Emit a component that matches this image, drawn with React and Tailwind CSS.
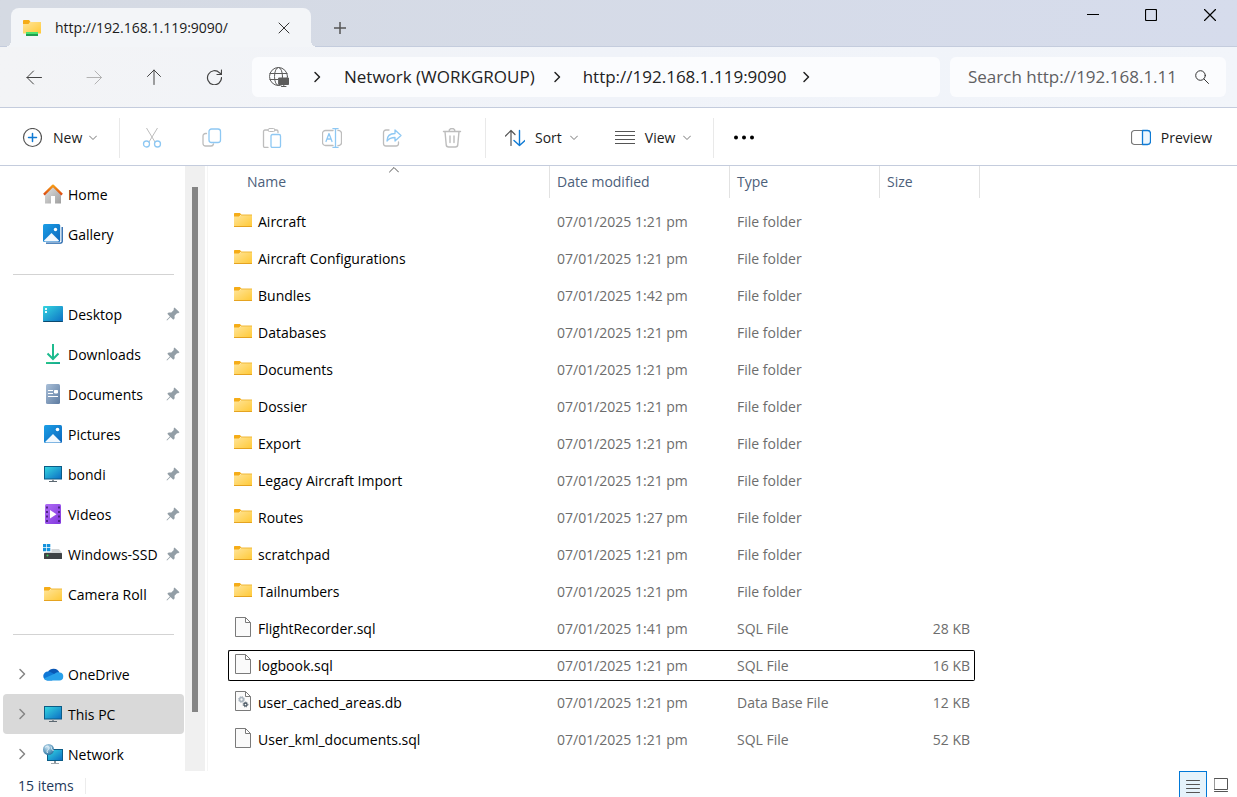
import React, { useState } from "react";

const quickAccess = [
  { name: "Desktop", icon: "desktop" },
  { name: "Downloads", icon: "downloads" },
  { name: "Documents", icon: "documents" },
  { name: "Pictures", icon: "pictures" },
  { name: "bondi", icon: "monitor" },
  { name: "Videos", icon: "videos" },
  { name: "Windows-SSD", icon: "drive" },
  { name: "Camera Roll", icon: "folder" },
];

const locations = [
  { name: "OneDrive", icon: "onedrive" },
  { name: "This PC", icon: "monitor" },
  { name: "Network", icon: "network" },
];

const folder = (name, date = "07/01/2025 1:21 pm") => ({
  name,
  date,
  type: "File folder",
  icon: "folder",
  size: "",
});

const files = [
  folder("Aircraft"),
  folder("Aircraft Configurations"),
  folder("Bundles", "07/01/2025 1:42 pm"),
  folder("Databases"),
  folder("Documents"),
  folder("Dossier"),
  folder("Export"),
  folder("Legacy Aircraft Import"),
  folder("Routes", "07/01/2025 1:27 pm"),
  folder("scratchpad"),
  folder("Tailnumbers"),
  {
    name: "FlightRecorder.sql",
    date: "07/01/2025 1:41 pm",
    type: "SQL File",
    icon: "file",
    size: "28 KB",
  },
  {
    name: "logbook.sql",
    date: "07/01/2025 1:21 pm",
    type: "SQL File",
    icon: "file",
    size: "16 KB",
  },
  {
    name: "user_cached_areas.db",
    date: "07/01/2025 1:21 pm",
    type: "Data Base File",
    icon: "database",
    size: "12 KB",
  },
  {
    name: "User_kml_documents.sql",
    date: "07/01/2025 1:21 pm",
    type: "SQL File",
    icon: "file",
    size: "52 KB",
  },
];

// Gradients shared by the coloured icons
const IconDefs = () => (
  <svg width="0" height="0" className="absolute" aria-hidden="true">
    <defs>
      <linearGradient id="gFolder" x1="0" y1="0" x2="1" y2="1">
        <stop offset="0" stopColor="#ffe59b" />
        <stop offset="1" stopColor="#ffc937" />
      </linearGradient>
      <linearGradient id="gScreen" x1="0" y1="0" x2="1" y2="1">
        <stop offset="0" stopColor="#35d6e0" />
        <stop offset="1" stopColor="#0c6fc4" />
      </linearGradient>
      <linearGradient id="gPicture" x1="0" y1="0" x2="1" y2="1">
        <stop offset="0" stopColor="#1c9fe6" />
        <stop offset="1" stopColor="#0a66bd" />
      </linearGradient>
      <linearGradient id="gRoof" x1="0" y1="0" x2="0" y2="1">
        <stop offset="0" stopColor="#f59a14" />
        <stop offset="1" stopColor="#dc4a12" />
      </linearGradient>
      <linearGradient id="gWall" x1="0" y1="0" x2="1" y2="1">
        <stop offset="0" stopColor="#e4e4e4" />
        <stop offset="1" stopColor="#9e9e9e" />
      </linearGradient>
      <linearGradient id="gDoc" x1="0" y1="0" x2="1" y2="1">
        <stop offset="0" stopColor="#a9bfd8" />
        <stop offset="1" stopColor="#5d7ba0" />
      </linearGradient>
      <linearGradient id="gDown" x1="0" y1="0" x2="1" y2="1">
        <stop offset="0" stopColor="#2fcf86" />
        <stop offset="1" stopColor="#0e9f96" />
      </linearGradient>
      <linearGradient id="gVideo" x1="0" y1="0" x2="1" y2="1">
        <stop offset="0" stopColor="#b06cf5" />
        <stop offset="1" stopColor="#8138dd" />
      </linearGradient>
      <radialGradient id="gGlobe" cx="0.4" cy="0.3" r="0.7">
        <stop offset="0" stopColor="#c9e4f3" />
        <stop offset="1" stopColor="#2f76a3" />
      </radialGradient>
    </defs>
  </svg>
);

const drawings = {
  home: (
    <>
      <path d="M2 9.5 10 2l8 7.5v10h-6v-7.5H8v7.5H2z" fill="url(#gWall)" />
      <path
        d="M.9 10.6 10 1.600l9.100 9"
        fill="none"
        stroke="url(#gRoof)"
        strokeWidth="2.2"
        strokeLinejoin="round"
      />
    </>
  ),
  gallery: (
    <>
      <path d="M3 19.2h14.500a1.700 1.700 0 0 0 1.700-1.700V3" fill="none" stroke="#1a5fa8" strokeWidth="1.3" />
      <rect width="17.2" height="18" rx="1.5" fill="url(#gPicture)" />
      <path d="M1 16.500 8.500 9l7.500 7.500a1 1 0 0 1-1 1H2a1 1 0 0 1-1-1z" fill="#f1f8fe" />
      <circle cx="12.5" cy="5.5" r="1.7" fill="#fff" />
    </>
  ),
  desktop: (
    <>
      <rect y="2" width="20" height="16" rx="1" fill="url(#gScreen)" />
      <path d="M0 17h20a1 1 0 0 1-1 1H1a1 1 0 0 1-1-1z" fill="#0b4a6f" />
      <path d="M2 4h2v2H2zM2 7h2v2H2z" fill="#e8fbff" />
    </>
  ),
  downloads: (
    <>
      <path
        d="M10 0v14.500M4.500 9.500 10 15l5.500-5.500"
        fill="none"
        stroke="#1dbb8e"
        strokeWidth="2"
      />
      <path d="M3 18h14v2H3z" fill="url(#gDown)" />
    </>
  ),
  documents: (
    <>
      <rect x="3" y="0" width="14" height="20" rx="1.5" fill="url(#gDoc)" />
      <path
        d="M5 6.500h5M5 9.500h5M5 12.500h10M11.500 6.500h3v2.500h-3z"
        fill="#fff"
        stroke="#fff"
      />
    </>
  ),
  pictures: (
    <>
      <rect x="1" y="1" width="18" height="18" rx="1.5" fill="url(#gPicture)" />
      <path d="M2.500 17.500 10 10l7.500 7.500a.6.600 0 0 1-.5 1H3a.6.600 0 0 1-.5-1z" fill="#f1f8fe" />
      <circle cx="14.5" cy="5.5" r="1.8" fill="#fff" />
    </>
  ),
  monitor: (
    <>
      <rect x="1" y="2" width="18" height="13.5" fill="#0b5c87" />
      <rect x="2" y="3" width="16" height="11.5" fill="url(#gScreen)" />
      <path d="M9 15.500h2V17H9z" fill="#8c959c" />
      <path d="M6 17h8v1H6z" fill="#5b6770" />
    </>
  ),
  videos: (
    <>
      <rect x="2" y="0" width="16" height="20" rx="1.5" fill="url(#gVideo)" />
      <path
        d="M4 2.500v16M16 2.500v16"
        stroke="#45207c"
        strokeWidth="1.8"
        strokeDasharray="2 2.5"
      />
      <path d="M7 6v8.500l6.500-4.250z" fill="#fff" />
    </>
  ),
  drive: (
    <>
      <path
        d="M0 0h3.300v3.300H0zM4 0h3.300v3.300H4zM0 4h3.300v3.300H0zM4 4h3.300v3.300H4z"
        fill="#1592dc"
      />
      <path d="M8.500 5h7.500l3 4H1l2-1h5.500z" fill="#d3d6d8" />
      <rect x="1" y="9" width="18" height="6" rx="0.5" fill="#3f4245" />
      <circle cx="4.5" cy="11.5" r="1" fill="#3ad15b" />
    </>
  ),
  folder: (
    <>
      <path d="M1 3.500A.8.800 0 0 1 1.800 3H7l1.500 2h-1L6 7H1z" fill="#f5ac17" />
      <path d="M1 6.500h5.200L8 5h11v11.500H1z" fill="url(#gFolder)" />
      <path d="M8 5h11" stroke="#f0b93a" />
      <path d="M1 16.500h18" stroke="#e5a320" />
    </>
  ),
  onedrive: (
    <>
      <path d="M5 8a6.500 6.500 0 0 1 11.500.5L10 12z" fill="#0a57b4" />
      <path d="M4.500 16.500A4.500 4.500 0 0 1 5 7.500c2 0 4 1 9 4.500l-5 4.500z" fill="#0f78d6" />
      <path d="M4.500 16.500c-1.500 0-3-.8-3.700-2L12 9.500c1-.8 3-1.500 4.500-1A4 4 0 0 1 16 16.500z" fill="#28a0ea" />
    </>
  ),
  network: (
    <>
      <rect x="4" y="5" width="16" height="12" fill="#0b5c87" />
      <rect x="5" y="6" width="14" height="10" fill="url(#gScreen)" />
      <path d="M11 17h2v2h-2z" fill="#8c959c" />
      <path d="M8 19h8v1H8z" fill="#a0a8ae" />
      <circle cx="5.5" cy="5.5" r="5.5" fill="url(#gGlobe)" />
      <path d="M2 3.500c2-2 4-1.500 4 .5S3 6 4.500 9M8 2.500c1 1.500-.5 3 2.500 4" fill="none" stroke="#eaf6fc" />
    </>
  ),
  file: (
    <path d="M2.500.5h10l5 5v14h-15zM12.500.5v5h5" fill="#fafafa" stroke="#7a7a7a" />
  ),
  database: (
    <>
      <path d="M2.500.5h10l5 5v14h-15zM12.500.5v5h5" fill="#fafafa" stroke="#7a7a7a" />
      <circle cx="8.5" cy="8.5" r="1.9" fill="none" stroke="#a9b4be" strokeWidth="1.5" />
      <circle cx="8.5" cy="8.5" r="3" fill="none" stroke="#a9b4be" strokeDasharray="1.2 1.15" />
      <circle cx="12.5" cy="13.5" r="1.5" fill="none" stroke="#4c5a66" strokeWidth="1.3" />
      <circle cx="12.5" cy="13.5" r="2.4" fill="none" stroke="#4c5a66" strokeDasharray="1 0.88" />
    </>
  ),
  drivefolder: (
    <>
      <path d="M1 2.500A1 1 0 0 1 2 2h5l1.500 2L6 7H1z" fill="#f5ac17" />
      <path d="M1 6h5.500L8 4h11v11.500H1z" fill="url(#gFolder)" />
      <rect x="4" y="14" width="12" height="3" fill="#4be36f" />
      <rect x="4" y="16" width="12" height="2" fill="#1f9e50" />
    </>
  ),
};

const Picture = ({ name }) => (
  <svg viewBox="0 0 20 20" className="h-5 w-5 shrink-0 overflow-visible" aria-hidden="true">
    {drawings[name]}
  </svg>
);

// Thin outline icon
const Line = ({ children, className = "h-5 w-5", box = "0 0 20 20" }) => (
  <svg
    viewBox={box}
    fill="none"
    stroke="currentColor"
    strokeLinecap="round"
    strokeLinejoin="round"
    className={`shrink-0 ${className}`}
    aria-hidden="true"
  >
    {children}
  </svg>
);

const ChevronRight = ({ className }) => (
  <Line box="0 0 8 12" className={`h-3 w-2 ${className}`}>
    <path d="M2 1.500 6.500 6 2 10.500" strokeWidth="1.5" />
  </Line>
);

const ChevronDown = () => (
  <Line box="0 0 8 6" className="h-1.5 w-2 text-[#777]">
    <path d="M.5 1 4 4.500 7.500 1" />
  </Line>
);

const Pin = () => (
  <svg viewBox="0 0 14 14" className="h-3.5 w-3.5 shrink-0" aria-hidden="true">
    <path
      d="M8.500.5 13.500 5.300l-1.300 1-1.200-.1-2.500 2.500.2 2.600-1.400 1.400-2.800-2.700L1 13.500l-.5-.5 3.400-3.500L1.300 6.700l1.400-1.300 2.600.2 2.500-2.500-.2-1.300z"
      fill="#939ea6"
    />
  </svg>
);

const TitleBar = () => (
  <header className="flex h-[47px] shrink-0 items-start justify-between border-b border-[#c4ccdd] bg-linear-to-r from-[#d5dae3] to-[#d6dcec]">
    <div className="flex pt-2 pl-[11px]">
      <div className="relative -mb-px flex h-[39px] w-[300px] items-center rounded-t-lg bg-[#f3f5f8] pl-[11px] pr-[17px]">
        <span className="absolute bottom-0 -left-1.5 h-1.5 w-1.5 bg-[radial-gradient(circle_at_0_0,transparent_6px,#f3f5f8_6px)]" />
        <span className="absolute -right-1.5 bottom-0 h-1.5 w-1.5 bg-[radial-gradient(circle_at_100%_0,transparent_6px,#f3f5f8_6px)]" />
        <Picture name="drivefolder" />
        <span className="ml-[13px] flex-1 text-sm font-medium text-[#1b1b1b]">
          http://192.168.1.119:9090/
        </span>
        <button aria-label="Close tab" className="flex h-5 w-5 items-center justify-center text-[#333]">
          <Line box="0 0 12 12" className="h-3 w-3">
            <path d="m1 1 10 10M11 1 1 11" />
          </Line>
        </button>
      </div>
      <button aria-label="New tab" className="ml-[19px] flex h-10 w-5 items-center justify-center text-[#555]">
        <Line box="0 0 12 12" className="h-3 w-3">
          <path d="M6 0v12M0 6h12" strokeWidth="1.5" />
        </Line>
      </button>
    </div>
    <div className="flex text-black">
      <button aria-label="Minimise" className="flex h-[30px] w-[58px] items-center justify-center">
        <Line box="0 0 12 12" className="h-3 w-3">
          <path d="M0 5.500h12" />
        </Line>
      </button>
      <button aria-label="Maximise" className="flex h-[30px] w-[58px] items-center justify-center">
        <Line box="0 0 12 12" className="h-3 w-3">
          <rect x="0.5" y="0.5" width="11" height="11" rx="1" strokeWidth="1.2" />
        </Line>
      </button>
      <button aria-label="Close" className="flex h-[30px] w-[57px] items-center justify-center pl-0.5">
        <Line box="0 0 12 12" className="h-3 w-3">
          <path d="m.5.5 11 11M11.500.5l-11 11" strokeWidth="1.2" />
        </Line>
      </button>
    </div>
  </header>
);

const NavButton = ({ label, children, className = "text-[#444]" }) => (
  <button aria-label={label} className={`flex h-10 w-[60px] items-center justify-center ${className}`}>
    <Line box="0 0 16 16" className="h-4 w-4">
      {children}
    </Line>
  </button>
);

const AddressBar = () => (
  <div className="flex h-[61px] shrink-0 items-center border-b border-[#c4ccdd] bg-linear-to-r from-[#f3f4f6] via-[#f0f3f9] to-[#f2f5fa] pl-1 pr-[11px] text-[17px] text-[#222]">
    <nav className="mr-2 flex">
      <NavButton label="Back">
        <path d="M15.500 8.500H1M7.500 2 1 8.500 7.500 15" />
      </NavButton>
      <NavButton label="Forward" className="text-[#b3b3b3]">
        <path d="M1 8.500h14.500M9 2l6.500 6.500L9 15" />
      </NavButton>
      <NavButton label="Up">
        <path d="M8 15.500V1M1.500 7.500 8 1l6.500 6.500" />
      </NavButton>
      <NavButton label="Refresh">
        <path d="M15.500 8.500A7 7 0 1 1 13.500 3.800L15 5M15.500 1v4.500H11" strokeWidth="1.2" />
      </NavButton>
    </nav>
    <div className="flex h-10 min-w-0 flex-1 items-center rounded-md bg-[#fbfcfe] pl-[17px]">
      <Line className="h-5 w-5 text-[#5c5c5c]">
        <circle cx="9.5" cy="9.5" r="9" />
        <ellipse cx="9.5" cy="9.5" rx="4" ry="9" />
        <path d="M1 6.500h17M1 12.500h8" />
        <path d="M10 11h9.500v6.500H10z" fill="currentColor" />
        <path d="M14.800 17.500v2M12.500 19.500h4.500" />
      </Line>
      <ChevronRight className="ml-6" />
      <button className="ml-[23px]">Network (WORKGROUP)</button>
      <ChevronRight className="ml-[18px]" />
      <button className="ml-[22px]">http://192.168.1.119:9090</button>
      <ChevronRight className="ml-4" />
    </div>
    <label className="ml-2.5 flex h-10 w-[276px] items-center rounded-md bg-[#fbfcfe] pl-[18px] pr-[17px]">
      <input
        type="text"
        aria-label="Search"
        placeholder="Search http://192.168.1.11"
        className="min-w-0 flex-1 bg-transparent outline-none placeholder:text-[#5f6062]"
      />
      <Line box="0 0 14 14" className="ml-2 h-3.5 w-3.5 text-[#333]">
        <circle cx="5.5" cy="5.5" r="4.8" />
        <path d="m9 9 4.500 4.500" />
      </Line>
    </label>
  </div>
);

const IconButton = ({ label, children }) => (
  <button
    aria-label={label}
    disabled
    className="flex h-10 w-[60px] items-center justify-center text-[#bdbdbd]"
  >
    <Line>{children}</Line>
  </button>
);

const Divider = () => <div className="h-10 w-px bg-[#e9e9e9]" />;

const Toolbar = () => (
  <div className="flex h-[58px] shrink-0 items-center border-b border-[#c4ccdd] bg-white pl-[22px] pr-[25px] pt-0.5 text-sm text-[#1b1b1b]">
    <button className="flex h-10 w-[97px] items-center">
      <Line className="h-5 w-5 text-[#555]">
        <circle cx="10.5" cy="9.5" r="9" strokeWidth="1.2" />
        <path d="M10.500 5.500v8M6.500 9.500h8" stroke="#0f7ad4" strokeWidth="1.5" />
      </Line>
      <span className="ml-[11px] mr-[7px]">New</span>
      <ChevronDown />
    </button>
    <Divider />
    <div className="ml-0.5 flex">
      <IconButton label="Cut">
        <path d="M4.500 0 13 14M15.500 0 7 14" />
        <circle cx="4.5" cy="16" r="3" stroke="#8ec8f3" strokeWidth="1.3" />
        <circle cx="15.5" cy="16" r="3" stroke="#8ec8f3" strokeWidth="1.3" />
      </IconButton>
      <IconButton label="Copy">
        <path d="M4.500 5.500h-1A2.500 2.500 0 0 0 1 8v7.500A2.500 2.500 0 0 0 3.500 18H9a2.500 2.500 0 0 0 2.500-2" strokeWidth="1.3" />
        <rect x="7" y="1" width="11.5" height="13.5" rx="2.5" stroke="#8ec8f3" strokeWidth="1.3" />
      </IconButton>
      <IconButton label="Paste">
        <path d="M6 2H3a1.500 1.500 0 0 0-1.500 1.500V18A1.500 1.500 0 0 0 3 19.500h3M12.500 2h2A1.500 1.500 0 0 1 16 3.500v1" strokeWidth="1.3" />
        <rect x="6" y="0.5" width="7" height="3" rx="1.5" />
        <rect x="9" y="6.5" width="9.500" height="13" rx="1.5" stroke="#8ec8f3" strokeWidth="1.3" />
      </IconButton>
      <IconButton label="Rename">
        <path d="M11 2.500H3.500A3 3 0 0 0 .5 5.500v9a3 3 0 0 0 3 3H11M16 2.500a3 3 0 0 1 3.500 3v9a3 3 0 0 1-3.500 3" strokeWidth="1.3" />
        <path d="m4 13.500 3-8 3 8M5 11h4M11 .5h5M13.500.5v19M11 19.500h5" stroke="#8ec8f3" strokeWidth="1.3" />
      </IconButton>
      <IconButton label="Share">
        <path d="M7 2H4a2.500 2.500 0 0 0-2.500 2.500v11A2.500 2.500 0 0 0 4 18h10a2.500 2.500 0 0 0 2.500-2.500V14" strokeWidth="1.3" />
        <path d="M13 2v3.500C8 5.500 5 8 5 13c2-2.500 4.500-3.500 8-3.500V13l6-5.500z" stroke="#8ec8f3" strokeWidth="1.3" />
      </IconButton>
      <IconButton label="Delete">
        <path d="M1.500 3.500h17M7 3.500a3 3 0 0 1 6 0M3 3.500l1.200 13A2.500 2.500 0 0 0 6.700 19h6.600a2.500 2.500 0 0 0 2.500-2.500L17 3.500M8 8v6.500M12 8v6.500" strokeWidth="1.4" />
      </IconButton>
    </div>
    <div className="ml-[3px]">
      <Divider />
    </div>
    <button className="ml-[19px] flex h-10 items-center">
      <Line className="h-5 w-5 text-[#555]">
        <path d="M6 17.500V2.500M.5 8 6 2.500 10 6.500" strokeWidth="1.2" />
        <path d="M14.500 2.500v15M9 12.500l5.500 5 5.500-5" stroke="#0f7ad4" strokeWidth="1.4" />
      </Line>
      <span className="ml-2.5 mr-2">Sort</span>
      <ChevronDown />
    </button>
    <button className="ml-[37px] flex h-10 items-center">
      <Line className="h-5 w-5 text-[#555]">
        <path d="M0 3.500h20M0 7.500h20M0 11.500h20M0 15.500h20" />
      </Line>
      <span className="ml-2.5 mr-2">View</span>
      <ChevronDown />
    </button>
    <div className="ml-[22px]">
      <Divider />
    </div>
    <button aria-label="See more" className="ml-5 flex h-10 w-5 items-center justify-center">
      <svg viewBox="0 0 20 20" className="h-5 w-5" aria-hidden="true">
        <circle cx="2" cy="9.5" r="2" />
        <circle cx="10" cy="9.5" r="2" />
        <circle cx="18" cy="9.5" r="2" />
      </svg>
    </button>
    <button className="ml-auto flex h-10 items-center">
      <Line className="h-5 w-5 text-[#777]">
        <path d="M11 2.500H3.500a3 3 0 0 0-3 3v8a3 3 0 0 0 3 3H11" strokeWidth="1.2" />
        <path d="M11.500 2.500h5a3 3 0 0 1 3 3v8a3 3 0 0 1-3 3h-5z" fill="#eef7fe" stroke="#0f7ad4" strokeWidth="1.3" />
      </Line>
      <span className="ml-2.5">Preview</span>
    </button>
  </div>
);

const SidebarItem = ({ item, pinned, expandable, selected }) => (
  <li>
    <a
      href="#"
      className={`ml-[3px] mr-px flex h-10 items-center rounded-sm pr-1 ${
        selected ? "bg-[#d9d9d9]" : ""
      }`}
    >
      <span className="flex w-10 shrink-0 items-center pl-[15px]">
        {expandable && <ChevronRight className="text-[#868686]" />}
      </span>
      <Picture name={item.icon} />
      <span className="ml-[5px] flex-1 whitespace-nowrap pt-0.5">{item.name}</span>
      {pinned && <Pin />}
    </a>
  </li>
);

const SidebarLine = () => (
  <li className="flex h-10 items-center pl-[13px] pr-[11px]">
    <div className="h-px flex-1 bg-[#d3d3d3]" />
  </li>
);

const Sidebar = () => (
  <aside className="flex w-[208px] shrink-0 overflow-hidden border-r border-[#f5f5f5]">
    <ul className="w-[185px] pt-2 text-sm text-black">
      <SidebarItem item={{ name: "Home", icon: "home" }} />
      <SidebarItem item={{ name: "Gallery", icon: "gallery" }} />
      <SidebarLine />
      {quickAccess.map((item) => (
        <SidebarItem key={item.name} item={item} pinned />
      ))}
      <SidebarLine />
      {locations.map((item) => (
        <SidebarItem
          key={item.name}
          item={item}
          expandable
          selected={item.name === "This PC"}
        />
      ))}
    </ul>
    <div className="w-5 bg-[#f0f0f0] pl-[7px] pt-[21px]">
      <div className="h-[525px] w-1.5 bg-[#858585]" />
    </div>
  </aside>
);

const HeaderCell = ({ children, className }) => (
  <th scope="col" className="relative p-0 pb-0.5 text-left align-top font-normal">
    <button className={`flex h-[33px] w-full items-center border-r border-[#e2e2e2] ${className}`}>
      {children}
    </button>
  </th>
);

const FileRow = ({ file, focused, onFocus }) => {
  const line = focused ? "border-black" : "border-transparent";
  return (
    <tr className="h-[31px]" onClick={onFocus}>
      <td className={`rounded-l-xs border-y border-l p-0 pl-1 text-black ${line}`}>
        <div className="flex items-center">
          <div className="pb-[3px]">
            <Picture name={file.icon} />
          </div>
          <span className="ml-[5px]">{file.name}</span>
        </div>
      </td>
      <td className={`border-y p-0 pl-[7px] ${line}`}>{file.date}</td>
      <td className={`border-y p-0 pl-[7px] ${line}`}>{file.type}</td>
      <td className={`rounded-r-xs border-y border-r p-0 pr-1 text-right ${line}`}>
        {file.size}
      </td>
    </tr>
  );
};

const FileTable = () => {
  const [focused, setFocused] = useState("logbook.sql");

  return (
    <main className="min-w-0 flex-1 overflow-hidden pl-5">
      <table className="-mt-[7px] w-[752px] table-fixed border-separate border-spacing-x-0 border-spacing-y-1.5 text-sm text-[#6d6d6d]">
        <colgroup>
          <col className="w-[322px]" />
          <col className="w-[180px]" />
          <col className="w-[150px]" />
          <col className="w-[95px]" />
          <col className="w-[5px]" />
        </colgroup>
        <thead className="text-[#4c607a]">
          <tr>
            <HeaderCell className="pl-[19px]">
              Name
              <Line box="0 0 10 6" className="absolute left-[161px] top-0.5 h-1.5 w-2.5 text-[#555]">
                <path d="M.5 5 5 .5 9.500 5" />
              </Line>
            </HeaderCell>
            <HeaderCell className="pl-[7px]">Date modified</HeaderCell>
            <HeaderCell className="pl-[7px]">Type</HeaderCell>
            <th scope="col" colSpan={2} className="p-0 pb-0.5 text-left align-top font-normal">
              <button className="flex h-[33px] w-full items-center border-r border-[#e2e2e2] pl-[7px]">
                Size
              </button>
            </th>
          </tr>
        </thead>
        <tbody>
          {files.map((file) => (
            <FileRow
              key={file.name}
              file={file}
              focused={file.name === focused}
              onFocus={() => setFocused(file.name)}
            />
          ))}
        </tbody>
      </table>
    </main>
  );
};

const StatusBar = () => (
  <footer className="flex h-[26px] shrink-0 items-center justify-between bg-white pl-[18px] pr-0.5 text-sm text-[#1e395b]">
    <div className="flex items-center pt-[3px]">
      <span className="w-[67px]">{files.length} items</span>
      <div className="h-4 w-px bg-[#ececec]" />
    </div>
    <div className="flex items-start self-stretch text-[#555]">
      <button
        aria-label="Details view"
        className="flex h-[26px] w-7 justify-center border border-b-0 border-[#0078d7] bg-[#e5f3fb] pt-2"
      >
        <Line box="0 0 14 14" className="h-3.5 w-3.5">
          <path d="M.5.500h13M.5 4.500h13M.5 8.500h13M.5 12.500h13" />
        </Line>
      </button>
      <button aria-label="Large icons view" className="flex h-[26px] w-7 justify-center pt-[7px]">
        <Line box="0 0 14 14" className="h-3.5 w-3.5">
          <path d="M.5.500h13v11H.5zM.5 13.500h13" />
        </Line>
      </button>
    </div>
  </footer>
);

const App = () => (
  <div className="flex h-screen flex-col overflow-hidden bg-white font-['Open_Sans','Noto_Sans',sans-serif]">
    <IconDefs />
    <TitleBar />
    <AddressBar />
    <Toolbar />
    <div className="flex min-h-0 flex-1">
      <Sidebar />
      <FileTable />
    </div>
    <StatusBar />
  </div>
);

export default App;
